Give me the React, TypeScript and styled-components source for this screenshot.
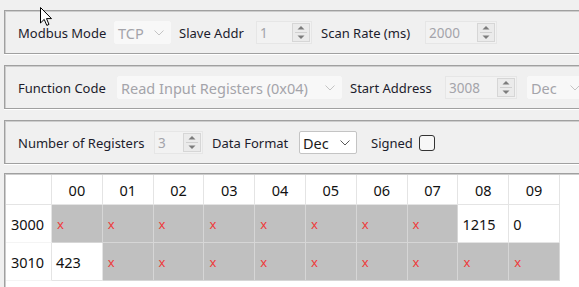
import React from 'react';
import styled, { createGlobalStyle } from 'styled-components';

const GlobalStyle = createGlobalStyle`
  html, body {
    margin: 0;
    padding: 0;
    background: #f0f0f0;
    overflow: hidden;
  }
  body {
    font-family: 'Noto Sans', 'Open Sans', sans-serif;
    font-size: 13px;
    color: #1c1c28;
  }
`;

type Cell = { text: string; kind: 'empty' | 'value' };

const columns = ['00', '01', '02', '03', '04', '05', '06', '07', '08', '09'];

const x: Cell = { text: 'x', kind: 'empty' };
const v = (text: string): Cell => ({ text, kind: 'value' });

const rows: { addr: string; cells: Cell[] }[] = [
  { addr: '3000', cells: [x, x, x, x, x, x, x, x, v('1215'), v('0')] },
  { addr: '3010', cells: [v('423'), x, x, x, x, x, x, x, x, x] },
];

const Chevron = ({ enabled }: { enabled?: boolean }) => (
  <svg width="10" height="6" viewBox="0 0 10 6">
    <path d="M0.5 0.5 L5 5 L9.5 0.5" fill="none" stroke={enabled ? '#5a5a5a' : '#c4c4c4'} strokeWidth="1" />
  </svg>
);

const SpinArrows = () => (
  <ArrowBox>
    <svg width="8" height="5" viewBox="0 0 8 5">
      <path d="M0.5 4.5 L4 1 L7.5 4.5 Z" fill="#7c7c7c" />
    </svg>
    <ArrowSep />
    <svg width="8" height="5" viewBox="0 0 8 5">
      <path d="M0.5 0.5 L4 4 L7.5 0.5 Z" fill="#7c7c7c" />
    </svg>
  </ArrowBox>
);

const Combo = ({ w, mr, value, enabled }: { w: number; mr?: number; value: string; enabled?: boolean }) => (
  <ComboBox $w={w} $mr={mr ?? 0} $enabled={!!enabled}>
    <span>{value}</span>
    <Chevron enabled={enabled} />
  </ComboBox>
);

const Spin = ({ w, mr, value }: { w: number; mr?: number; value: string }) => (
  <SpinBox $w={w} $mr={mr ?? 0}>
    <span>{value}</span>
    <SpinArrows />
  </SpinBox>
);

const Cursor = () => (
  <CursorMark width="13" height="20" viewBox="0 0 13 20">
    <path
      d="M0.5 0.5 L0.5 16 L4.2 12.4 L6.8 18.4 L9 17.4 L6.5 11.6 L11.5 11.6 Z"
      fill="#ffffff"
      stroke="#000000"
      strokeWidth="1"
      strokeLinejoin="round"
    />
  </CursorMark>
);

export default function App() {
  return (
    <Page>
      <GlobalStyle />
      <Cursor />
      <Group>
        <Label $w={96}>Modbus Mode</Label>
        <Combo w={57} mr={8} value="TCP" />
        <Label $w={77}>Slave Addr</Label>
        <Spin w={56} mr={9} value="1" />
        <Label $w={104}>Scan Rate (ms)</Label>
        <Spin w={72} value="2000" />
      </Group>
      <Group>
        <Label $w={99}>Function Code</Label>
        <Combo w={225} mr={8} value="Read Input Registers (0x04)" />
        <Label $w={95}>Start Address</Label>
        <Spin w={72} mr={10} value="3008" />
        <Combo w={60} value="Dec" />
      </Group>
      <Group>
        <Label $w={136}>Number of Registers</Label>
        <Spin w={49} mr={9} value="3" />
        <Label $w={87}>Data Format</Label>
        <Combo w={58} mr={14} value="Dec" enabled />
        <Label $w={48}>Signed</Label>
        <CheckBox />
      </Group>
      <TableFrame>
        <Grid>
          <Corner />
          {columns.map((c) => (
            <HeadCell key={c}>{c}</HeadCell>
          ))}
          {rows.map((r) => (
            <React.Fragment key={r.addr}>
              <RowLabel>{r.addr}</RowLabel>
              {r.cells.map((cell, i) => (
                <DataCell key={i} $kind={cell.kind}>
                  {cell.text}
                </DataCell>
              ))}
            </React.Fragment>
          ))}
        </Grid>
      </TableFrame>
    </Page>
  );
}

const Page = styled.div`
  position: relative;
  display: flex;
  flex-direction: column;
  gap: 11px;
  padding: 10px 0 0 4px;
  width: 100%;
  height: 287px;
  box-sizing: border-box;
  overflow: hidden;
`;

const CursorMark = styled.svg`
  position: absolute;
  left: 40px;
  top: 7px;
  z-index: 2;
`;

const Group = styled.div`
  display: flex;
  align-items: center;
  flex: none;
  height: 44px;
  padding: 1px 0 0 13px;
  box-sizing: border-box;
  overflow: hidden;
  border-top: 1px solid #a0a0a0;
  border-left: 1px solid #a0a0a0;
  border-bottom: 1px solid #a0a0a0;
  box-shadow: inset 1px 1px 0 #cdcdcd, 0 1px 0 #ffffff;
`;

const Label = styled.span<{ $w: number }>`
  flex: none;
  width: ${(p) => p.$w}px;
  white-space: nowrap;
  color: #1c1c2c;
`;

const ComboBox = styled.div<{ $w: number; $mr: number; $enabled: boolean }>`
  flex: none;
  display: flex;
  align-items: center;
  justify-content: space-between;
  width: ${(p) => p.$w}px;
  height: 23px;
  margin-right: ${(p) => p.$mr}px;
  padding: 0 6px 0 3px;
  box-sizing: border-box;
  white-space: nowrap;
  overflow: hidden;
  font-size: 14.5px;
  background: ${(p) => (p.$enabled ? '#ffffff' : '#f8f8f8')};
  border: 1px solid ${(p) => (p.$enabled ? '#c4c4c4' : '#f8f8f8')};
  border-radius: 2px;
  color: ${(p) => (p.$enabled ? '#1a1a1a' : '#a4a4aa')};
`;

const SpinBox = styled.div<{ $w: number; $mr: number }>`
  flex: none;
  display: flex;
  align-items: center;
  justify-content: space-between;
  width: ${(p) => p.$w}px;
  height: 23px;
  margin-right: ${(p) => p.$mr}px;
  padding: 0 1px 0 3px;
  box-sizing: border-box;
  font-size: 13.5px;
  background: #f2f2f2;
  border: 1px solid #e6e6e6;
  color: #a4a4aa;
`;

const ArrowBox = styled.div`
  display: flex;
  flex-direction: column;
  align-items: center;
  justify-content: center;
  gap: 2px;
  width: 18px;
  height: 19px;
  box-sizing: border-box;
  background: #ebebeb;
  border: 1px solid #d6d6d6;
`;

const ArrowSep = styled.div`
  width: 12px;
  height: 1px;
  background: #d0d0d0;
`;

const CheckBox = styled.div`
  flex: none;
  width: 16px;
  height: 16px;
  box-sizing: border-box;
  border: 1px solid #333333;
  border-radius: 3px;
  background: #f7f7f7;
`;

const TableFrame = styled.div`
  flex: 1;
  margin-top: -2px;
  overflow: hidden;
  background: #ffffff;
  border-top: 1px solid #a0a0a0;
  border-left: 1px solid #a0a0a0;
  box-shadow: inset 1px 1px 0 #cdcdcd;
  padding: 1px 0 0 1px;
  font-size: 14.5px;
`;

const Grid = styled.div`
  display: grid;
  grid-template-columns: 46px repeat(10, 50.8px);
  grid-template-rows: 30px 38px 38px;
`;

const Corner = styled.div`
  border-right: 1px solid #e4e4e4;
  border-bottom: 1px solid #e4e4e4;
`;

const HeadCell = styled.div`
  display: flex;
  align-items: center;
  justify-content: center;
  border-right: 1px solid #e4e4e4;
  border-bottom: 1px solid #e4e4e4;
  color: #111111;
`;

const RowLabel = styled.div`
  display: flex;
  align-items: center;
  justify-content: center;
  padding-right: 2px;
  border-right: 1px solid #e4e4e4;
  border-bottom: 1px solid #f4f4f4;
  color: #111111;
`;

const DataCell = styled.div<{ $kind: 'empty' | 'value' }>`
  display: flex;
  align-items: center;
  padding-left: ${(p) => (p.$kind === 'empty' ? 5 : 4)}px;
  box-sizing: border-box;
  background: ${(p) => (p.$kind === 'empty' ? '#c0c0c0' : '#ffffff')};
  border-right: 1px solid ${(p) => (p.$kind === 'empty' ? '#d6d6d6' : '#e4e4e4')};
  border-bottom: 1px solid ${(p) => (p.$kind === 'empty' ? '#d6d6d6' : '#e4e4e4')};
  color: ${(p) => (p.$kind === 'empty' ? '#ee3b3b' : '#111111')};
  font-size: ${(p) => (p.$kind === 'empty' ? 13 : 14.5)}px;
`;
